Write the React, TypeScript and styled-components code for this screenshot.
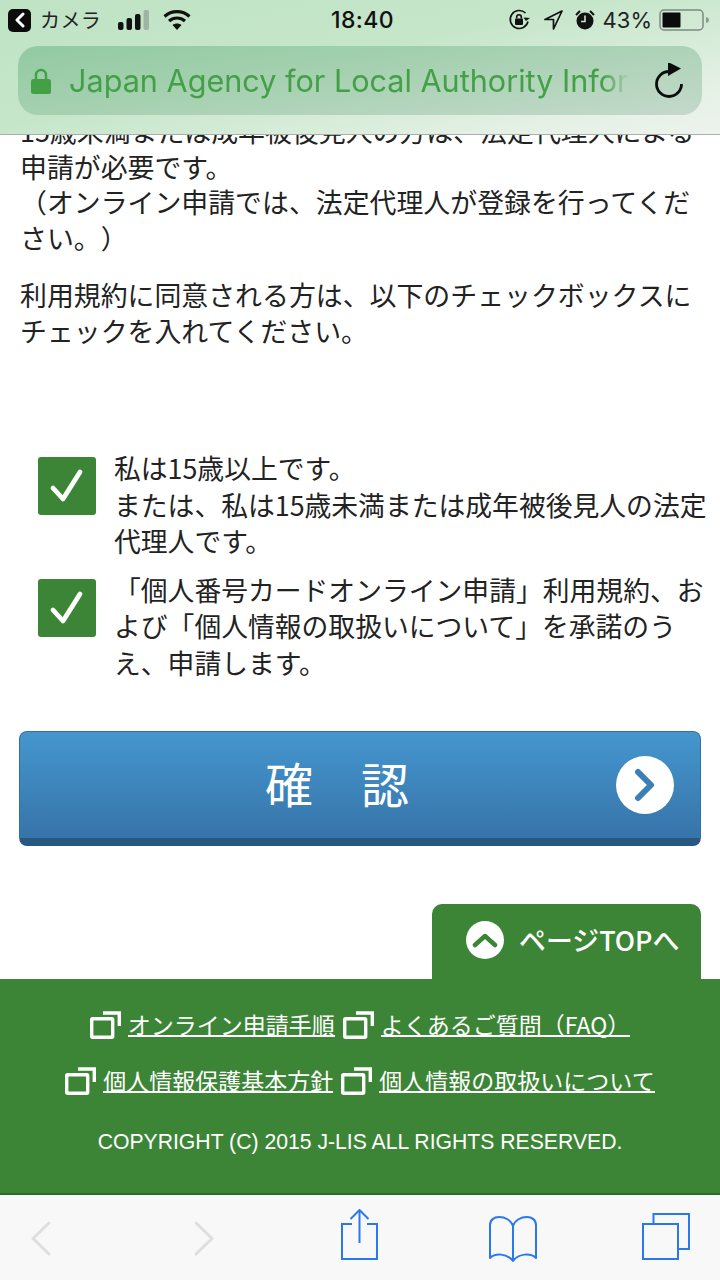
import styled, { createGlobalStyle } from "styled-components";

const GlobalStyle = createGlobalStyle`
  html, body {
    margin: 0;
    padding: 0;
    background: #fff;
  }
  body {
    font-family: "Noto Sans CJK JP", "Liberation Sans", sans-serif;
    text-spacing-trim: space-all;
  }
`;

const Screen = styled("div")`
  width: 720px;
  height: 1280px;
  display: flex;
  flex-direction: column;
  overflow: hidden;
  background: #fff;
`;

const Header = styled("header")`
  flex: none;
  height: 135px;
  box-sizing: border-box;
  border-bottom: 1px solid #a9b0aa;
  background: linear-gradient(168deg, #bfe3c4 0%, #c6e6ca 45%, #e6f1e6 85%, #edf3ed 100%);
  position: relative;
  z-index: 2;
`;

const StatusBar = styled("div")`
  height: 40px;
  box-sizing: border-box;
  padding: 0 10px 0 8px;
  display: grid;
  grid-template-columns: 1fr auto 1fr;
  align-items: center;
  color: #111;
`;

const StatusLeft = styled("div")`
  display: flex;
  align-items: center;
`;

const StatusRight = styled("div")`
  display: flex;
  align-items: center;
  justify-content: flex-end;
`;

const StatusGap = styled("span")<{ $width: number }>`
  flex: none;
  width: ${(p) => p.$width}px;
`;

const BackBadge = styled("div")`
  width: 23px;
  height: 23px;
  border-radius: 5px;
  background: #0c0c0c;
  display: flex;
  align-items: center;
  justify-content: center;
  margin-right: 9px;
`;

const CameraLabel = styled("span")`
  font-size: 20px;
  line-height: 24px;
  letter-spacing: 0.4px;
  width: 77px;
  color: #222;
`;

const Time = styled("span")`
  font-family: Inter, "Liberation Sans", sans-serif;
  font-size: 23px;
  font-weight: 500;
  line-height: 28px;
  letter-spacing: 0.4px;
  margin-left: 7px;
`;

const Percent = styled("span")`
  font-family: Inter, "Liberation Sans", sans-serif;
  font-size: 22px;
  line-height: 28px;
  margin: 0 7px 0 8px;
  color: #222;
`;

const UrlBar = styled("div")`
  margin: 6px 18px 0;
  height: 69px;
  border-radius: 20px;
  background: linear-gradient(172deg, #92caa1 0%, #a6d1b1 45%, #c4d9cb 100%);
  display: flex;
  align-items: center;
  padding: 0 18px 0 13px;
`;

const UrlText = styled("div")`
  flex: 1;
  margin-left: 18px;
  margin-right: 24px;
  overflow: hidden;
  white-space: nowrap;
  font-family: Inter, "Liberation Sans", sans-serif;
  font-size: 30.6px;
  line-height: 40px;
  color: #43a047;
  -webkit-mask-image: linear-gradient(90deg, #000 95%, transparent 100%);
  mask-image: linear-gradient(90deg, #000 95%, transparent 100%);
`;

const Main = styled("main")`
  flex: 1;
  min-height: 0;
  overflow: hidden;
  display: flex;
  flex-direction: column;
`;

const Notice = styled("div")`
  margin-top: -22px;
  padding: 0 20px;
  color: #222;
  font-size: 26.9px;
  line-height: 35.5px;
`;

const NoticeParagraph = styled("p")`
  margin: 0 0 22px;
`;

const Checks = styled("div")`
  margin-top: 80px;
  padding: 0 10px 0 38px;
  display: flex;
  flex-direction: column;
  gap: 12px;
`;

const CheckRow = styled("label")`
  display: flex;
  gap: 18px;
  align-items: flex-start;
  font-size: 26.8px;
  line-height: 36.6px;
  color: #222;
`;

const CheckBox = styled("span")`
  flex: none;
  width: 58px;
  height: 58px;
  margin-top: 7px;
  border-radius: 3px;
  background: #3d8536;
  display: flex;
  align-items: center;
  justify-content: center;
`;

const ConfirmButton = styled("button")`
  margin: 49px 19px 0;
  height: 115px;
  box-sizing: border-box;
  border: 1px solid #33709f;
  border-bottom: 8px solid #28577f;
  border-radius: 8px;
  background: linear-gradient(180deg, #4596cf 0%, #3674a9 100%);
  padding: 0 26px 0 0;
  display: flex;
  align-items: center;
  justify-content: space-between;
  color: #fff;
  font-family: inherit;
`;

const ConfirmLabel = styled("span")`
  flex: 1;
  padding: 0 0 6px 38px;
  text-align: center;
  font-size: 48px;
  line-height: 60px;
`;

const RoundIcon = styled("span")<{ $size: number }>`
  flex: none;
  width: ${(p) => p.$size}px;
  height: ${(p) => p.$size}px;
  border-radius: 50%;
  background: #fff;
  display: flex;
  align-items: center;
  justify-content: center;
`;

const TopTabRow = styled("div")`
  margin-top: 58px;
  padding-right: 19px;
  display: flex;
  justify-content: flex-end;
`;

const TopTab = styled("a")`
  width: 269px;
  height: 75px;
  box-sizing: border-box;
  padding: 17px 0 0 34px;
  border-radius: 10px 10px 0 0;
  background: #3d8536;
  display: flex;
  align-items: flex-start;
  gap: 15px;
  color: #fff;
  font-size: 26.9px;
  font-weight: 500;
  line-height: 38px;
  white-space: nowrap;
`;

const Footer = styled("footer")`
  flex: 1;
  background: #3d8536;
  border-bottom: 2px solid #2f6a2a;
  color: #fff;
  padding-top: 32px;
  text-align: center;
`;

const FooterLinks = styled("div")`
  display: flex;
  justify-content: center;
  gap: 8px;
  height: 56px;
`;

const FooterLink = styled("a")`
  display: flex;
  align-items: flex-start;
  gap: 7px;
  font-size: 23px;
`;

const FooterLinkText = styled("span")`
  display: block;
  height: 25px;
  line-height: 28px;
  margin-top: -1px;
  border-bottom: 2px solid #fff;
  color: #fff;
  white-space: nowrap;
`;

const Copyright = styled("div")`
  margin-top: 5px;
  font-family: "Liberation Sans", sans-serif;
  font-size: 21.2px;
  line-height: 28px;
`;

const Toolbar = styled("nav")`
  flex: none;
  height: 85px;
  background: #f8f8f8;
  display: flex;
  align-items: flex-start;
  padding-left: 31px;
`;

const ToolSlot = styled("div")<{ $left: number; $top: number }>`
  margin-left: ${(p) => p.$left}px;
  padding-top: ${(p) => p.$top}px;
  display: flex;
`;

const FooterIcon = () => (
  <svg width="31" height="28" viewBox="0 0 31 28" fill="none" stroke="#fff" strokeWidth="3.4">
    <rect x="1.7" y="7.7" width="21" height="18.6" rx="1" />
    <path d="M13 2h16.300v13" />
  </svg>
);

const Tick = () => (
  <svg width="40" height="40" viewBox="0 0 40 40" fill="none" stroke="#fff" strokeWidth="4.8" strokeLinecap="round" strokeLinejoin="round">
    <path d="M6 22l10 11L33 6" />
  </svg>
);

const Signal = () => (
  <svg width="33" height="22" viewBox="0 0 33 22" fill="#111">
    <rect x="1" y="13" width="5.5" height="8" rx="2" />
    <rect x="9.5" y="9" width="5.5" height="12" rx="2" />
    <rect x="18" y="5" width="5.5" height="16" rx="2" />
    <rect x="26.5" y="1" width="5.5" height="20" rx="2" fill="#9fb4a4" />
  </svg>
);

const Wifi = () => (
  <svg width="28" height="22" viewBox="0 0 28 22" fill="none" stroke="#111" strokeWidth="3.2">
    <path d="M1.5 7.5C8.5 1 19.5 1 26.5 7.5" />
    <path d="M6 12c4.500-4 11.500-4 16 0" />
    <path d="M14 21l-4.500-5c2.700-2 6.300-2 9 0z" fill="#111" stroke="none" />
  </svg>
);

const RotationLock = () => (
  <svg width="22" height="22" viewBox="0 0 22 22" fill="none" stroke="#111" strokeWidth="1.6">
    <path d="M20 12.500A9 9 0 1 1 17.500 4" />
    <path d="M22 9l-4 3-2.500-3.500z" fill="#111" stroke="none" />
    <rect x="7" y="9.500" width="8" height="6.500" rx="1" fill="#111" stroke="none" />
    <path d="M8.700 9.500V8a2.300 2.300 0 0 1 4.600 0v1.500" />
  </svg>
);

const Location = () => (
  <svg width="19" height="20" viewBox="0 0 19 20" fill="none" stroke="#111" strokeWidth="1.7" strokeLinejoin="round">
    <path d="M18 1L1 9.500h8.500V19z" />
  </svg>
);

const Alarm = () => (
  <svg width="20" height="20" viewBox="0 0 20 20">
    <circle cx="10" cy="11" r="8.500" fill="#111" />
    <path d="M1 5l4-4M19 5l-4-4" stroke="#111" strokeWidth="2" fill="none" />
    <path d="M10 5.500V11.500H6" stroke="#c6e6ca" strokeWidth="1.600" fill="none" />
  </svg>
);

const Battery = () => (
  <svg width="51" height="22" viewBox="0 0 51 22">
    <rect x="1" y="1" width="43" height="20" rx="4" fill="none" stroke="#7d8a80" strokeWidth="1.500" />
    <rect x="3.500" y="3.500" width="18" height="15" rx="1" fill="#0b0b0b" />
    <path d="M47 8c2 .5 3 1.500 3 3s-1 2.500-3 3z" fill="#8d9a90" />
  </svg>
);

const Lock = () => (
  <svg width="20" height="26" viewBox="0 0 20 26">
    <path d="M5 12V7a5 5 0 0 1 10 0v5" fill="none" stroke="#43a047" strokeWidth="2.400" />
    <rect x="0" y="11" width="20" height="15" rx="2.500" fill="#43a047" />
  </svg>
);

const Reload = () => (
  <svg width="30" height="36" viewBox="0 2 30 36" fill="none">
    <path d="M15 10.500A12.500 12.500 0 1 0 27.500 23" stroke="#0d0d0d" strokeWidth="2.800" />
    <path d="M14 1l13 6.500L14 15z" fill="#0d0d0d" />
  </svg>
);

const ChevronLeft = () => (
  <svg width="20" height="35" viewBox="0 0 20 35" fill="none" stroke="#dedede" strokeWidth="3" strokeLinecap="round" strokeLinejoin="round">
    <path d="M18 2L2 17.500 18 33" />
  </svg>
);

const ChevronRight = () => (
  <svg width="20" height="35" viewBox="0 0 20 35" fill="none" stroke="#dedede" strokeWidth="3" strokeLinecap="round" strokeLinejoin="round">
    <path d="M2 2l16 15.500L2 33" />
  </svg>
);

const Share = () => (
  <svg width="37" height="51" viewBox="0 0 37 51" fill="none" stroke="#2b78ee" strokeWidth="2">
    <path d="M11 15H1v35h35V15H26" />
    <path d="M18.500 34V2" />
    <path d="M9.500 10l9-9 9 9" />
  </svg>
);

const Book = () => (
  <svg width="48" height="46" viewBox="0 0 48 46" fill="none" stroke="#2b78ee" strokeWidth="2" strokeLinejoin="round">
    <path d="M24 10C22 4 16 1 10 1 5 1 1 4 1 9v33c5-5 17-5 23 3 6-8 18-8 23-3V9c0-5-4-8-9-8-6 0-12 3-14 9z" />
    <path d="M24 10v35" />
  </svg>
);

const Tabs = () => (
  <svg width="48" height="47" viewBox="0 0 48 47" fill="none" stroke="#2b78ee" strokeWidth="2">
    <rect x="1" y="11" width="35" height="35" />
    <path d="M11.500 11V1H47v35h-11" />
  </svg>
);

const SmallChevron = ({ color, up }: { color: string; up?: boolean }) => (
  <svg
    width={up ? 26 : 22}
    height={up ? 16 : 34}
    viewBox={up ? "0 0 26 16" : "0 0 22 34"}
    fill="none"
    stroke={color}
    strokeWidth={up ? 4.5 : 6}
    strokeLinecap="round"
    strokeLinejoin="round"
  >
    <path d={up ? "M3 13L13 4l10 9" : "M4 4l13 13L4 30"} />
  </svg>
);

const links = [
  ["オンライン申請手順", "よくあるご質問（FAQ）"],
  ["個人情報保護基本方針", "個人情報の取扱いについて"],
];

export default function App() {
  return (
    <Screen>
      <GlobalStyle />
      <Header>
        <StatusBar>
          <StatusLeft>
            <BackBadge>
              <svg width="12" height="16" viewBox="0 0 12 16" fill="none" stroke="#fff" strokeWidth="3" strokeLinecap="round" strokeLinejoin="round">
                <path d="M9 2L3 8l6 6" />
              </svg>
            </BackBadge>
            <CameraLabel>カメラ</CameraLabel>
            <Signal />
            <StatusGap $width={13} />
            <Wifi />
          </StatusLeft>
          <Time>18:40</Time>
          <StatusRight>
            <RotationLock />
            <StatusGap $width={14} />
            <Location />
            <StatusGap $width={12} />
            <Alarm />
            <Percent>43%</Percent>
            <Battery />
          </StatusRight>
        </StatusBar>
        <UrlBar>
          <Lock />
          <UrlText>Japan Agency for Local Authority Infor</UrlText>
          <Reload />
        </UrlBar>
      </Header>

      <Main>
        <Notice>
          <NoticeParagraph>
            15歳未満または成年被後見人の方は、法定代理人による申請が必要です。
            <br />
            （オンライン申請では、法定代理人が登録を行ってください。）
          </NoticeParagraph>
          <NoticeParagraph>
            利用規約に同意される方は、以下のチェックボックスにチェックを入れてください。
          </NoticeParagraph>
        </Notice>

        <Checks>
          <CheckRow>
            <CheckBox>
              <Tick />
            </CheckBox>
            <span>
              私は15歳以上です。
              <br />
              または、私は15歳未満または成年被後見人の法定代理人です。
            </span>
          </CheckRow>
          <CheckRow>
            <CheckBox>
              <Tick />
            </CheckBox>
            <span>「個人番号カードオンライン申請」利用規約、および「個人情報の取扱いについて」を承諾のうえ、申請します。</span>
          </CheckRow>
        </Checks>

        <ConfirmButton>
          <ConfirmLabel>確　認</ConfirmLabel>
          <RoundIcon $size={58}>
            <SmallChevron color="#3a7fb8" />
          </RoundIcon>
        </ConfirmButton>

        <TopTabRow>
          <TopTab>
            <RoundIcon $size={38}>
              <SmallChevron color="#3d8536" up />
            </RoundIcon>
            ページTOPへ
          </TopTab>
        </TopTabRow>

        <Footer>
          {links.map((row) => (
            <FooterLinks key={row[0]}>
              {row.map((label) => (
                <FooterLink key={label}>
                  <FooterIcon />
                  <FooterLinkText>{label}</FooterLinkText>
                </FooterLink>
              ))}
            </FooterLinks>
          ))}
          <Copyright>COPYRIGHT (C) 2015 J-LIS ALL RIGHTS RESERVED.</Copyright>
        </Footer>
      </Main>

      <Toolbar>
        <ToolSlot $left={0} $top={26}>
          <ChevronLeft />
        </ToolSlot>
        <ToolSlot $left={143} $top={26}>
          <ChevronRight />
        </ToolSlot>
        <ToolSlot $left={127} $top={14}>
          <Share />
        </ToolSlot>
        <ToolSlot $left={111} $top={21}>
          <Book />
        </ToolSlot>
        <ToolSlot $left={105} $top={18}>
          <Tabs />
        </ToolSlot>
      </Toolbar>
    </Screen>
  );
}
